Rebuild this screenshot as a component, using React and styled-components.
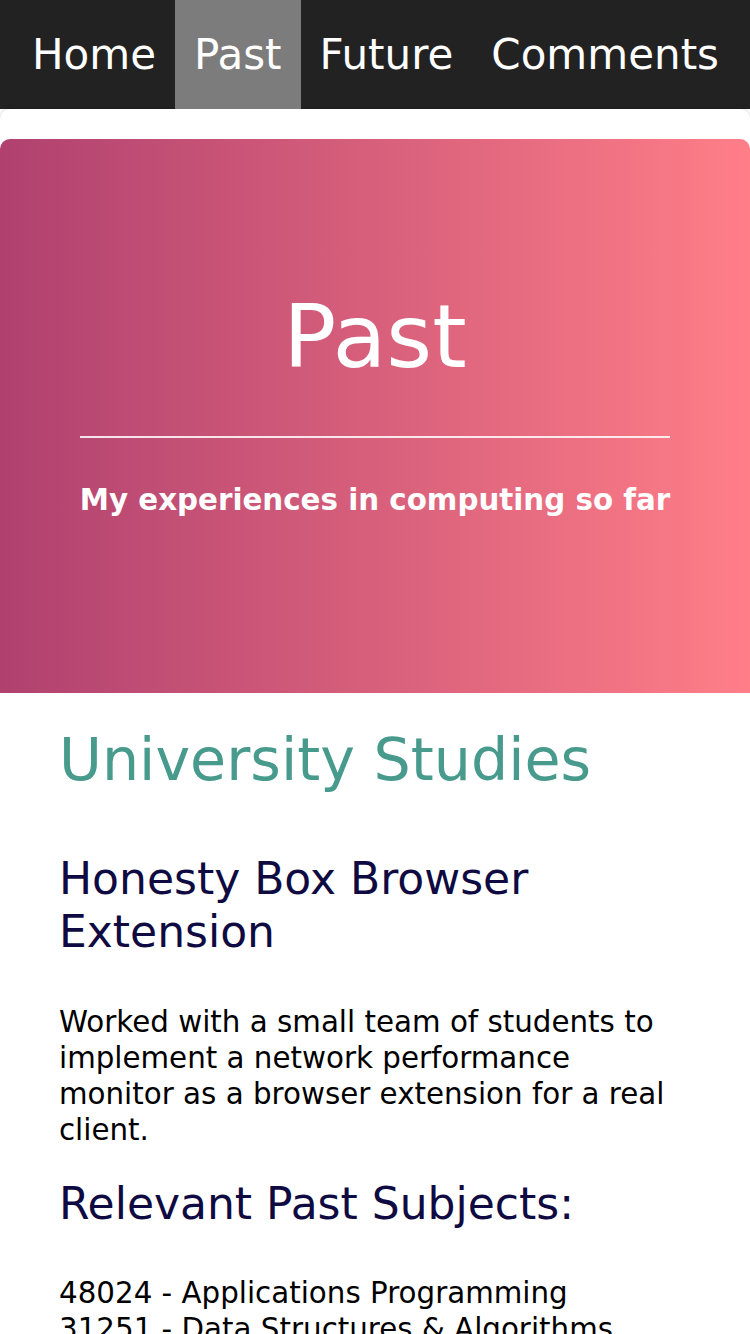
import React from "react";
import styled, { createGlobalStyle } from "styled-components";

const Global = createGlobalStyle`
  html, body {
    margin: 0;
    padding: 0;
    background: #ffffff;
    font-family: "DejaVu Sans", "Noto Sans", sans-serif;
  }
  * { box-sizing: border-box; }
`;

const NavBar = styled.nav`
  display: flex;
  align-items: stretch;
  height: 109px;
  padding-left: 13px;
  background: #222222;
`;

const NavItem = styled.a`
  display: block;
  padding: 0 19px;
  line-height: 109px;
  font-size: 42px;
  color: #ffffff;
  text-decoration: none;
  white-space: nowrap;
  background: ${(p) => (p.$active ? "#7c7c7c" : "transparent")};
`;

const Card = styled.main`
  background: #ffffff;
  border-radius: 10px 10px 0 0;
  box-shadow: 0 0 5px rgba(0, 0, 0, 0.18);
  padding-top: 30px;
`;

const Hero = styled.header`
  display: flex;
  justify-content: center;
  padding: 146px 0 176px;
  border-radius: 10px 10px 0 0;
  background: linear-gradient(to right, #b0416f, #ff7e88);
  color: #ffffff;
  text-align: center;
`;

const HeroInner = styled.div`
  display: flex;
  flex-direction: column;
  width: fit-content;
`;

const HeroTitle = styled.h1`
  margin: 0;
  font-size: 88px;
  font-weight: normal;
  line-height: normal;
`;

const Rule = styled.hr`
  width: 100%;
  margin: 48px 0 45px;
  border: 0;
  border-top: 2px solid rgba(255, 255, 255, 0.85);
`;

const HeroSub = styled.p`
  margin: 0;
  font-size: 29.33px;
  font-weight: bold;
  line-height: normal;
  white-space: nowrap;
`;

const Content = styled.section`
  padding: 0 59px;
  display: flow-root;
`;

const SectionTitle = styled.h2`
  margin: 33px 0 59px;
  font-size: 58.67px;
  font-weight: normal;
  line-height: normal;
  color: #479a8c;
`;

const SubTitle = styled.h3`
  margin: 30px 0 45px;
  font-size: 44px;
  font-weight: normal;
  line-height: 1.2;
  color: #0f0b42;
`;

const Text = styled.p`
  margin: 0;
  font-size: 29.33px;
  line-height: 36px;
  color: #000000;
`;

export default function App() {
  return (
    <>
      <Global />
      <NavBar>
        <NavItem href="#">Home</NavItem>
        <NavItem href="#" $active>
          Past
        </NavItem>
        <NavItem href="#">Future</NavItem>
        <NavItem href="#">Comments</NavItem>
      </NavBar>
      <Card>
        <Hero>
          <HeroInner>
            <HeroTitle>Past</HeroTitle>
            <Rule />
            <HeroSub>My experiences in computing so far</HeroSub>
          </HeroInner>
        </Hero>
        <Content>
          <SectionTitle>University Studies</SectionTitle>
          <SubTitle>Honesty Box Browser Extension</SubTitle>
          <Text>
            Worked with a small team of students to implement a network
            performance monitor as a browser extension for a real client.
          </Text>
          <SubTitle>Relevant Past Subjects:</SubTitle>
          <Text>
            48024 - Applications Programming
            <br />
            31251 - Data Structures &amp; Algorithms
          </Text>
        </Content>
      </Card>
    </>
  );
}
